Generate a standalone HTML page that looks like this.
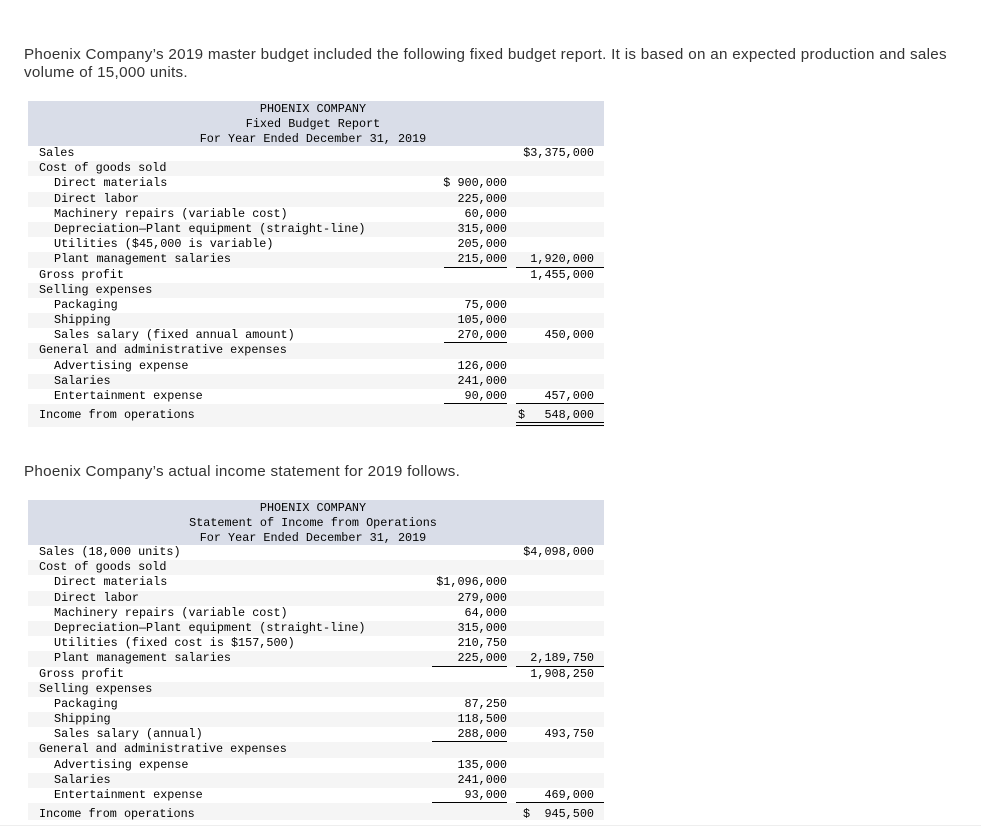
<!DOCTYPE html>
<html><head><meta charset="utf-8"><style>
body{margin:0;width:981px;height:840px;overflow:hidden;background:#fff;position:relative;font-family:"Liberation Sans",sans-serif;}
.p{position:absolute;left:24px;font-size:15.2px;letter-spacing:0.3px;color:#333;line-height:18px;white-space:nowrap;}
.t{position:absolute;left:28px;width:576px;font-family:"Liberation Mono",monospace;font-size:11.8px;color:#000;}
.h{background:#d9dde8;height:45px;text-align:center;line-height:15px;padding-right:0;}
.h div{width:570px;}
.r{position:relative;height:15.2px;line-height:15.2px;white-space:pre;}
.l{position:absolute;left:11px;}
.i{left:26px;}
.a{position:absolute;right:97px;}
.b{position:absolute;right:10px;}
.u1{position:absolute;left:416px;width:63px;bottom:0;border-bottom:1px solid #000;}
.u2{position:absolute;left:488px;width:88px;bottom:0;border-bottom:1px solid #000;}
.dd{position:absolute;left:488px;width:88px;bottom:1px;height:2px;border-top:1px solid #000;border-bottom:1px solid #000;}
</style></head><body>
<div class="p" style="top:46px">Phoenix Company’s 2019 master budget included the following fixed budget report. It is based on an expected production and sales<br>volume of 15,000 units.</div>
<div class="t" style="top:101px">
<div class="h"><div style="padding-top:1px">PHOENIX COMPANY<br>Fixed Budget Report<br>For Year Ended December 31, 2019</div></div>
<div>
<div class="r" style="background:#fff"><span class="l">Sales</span><span class="b">$3,375,000</span></div>
<div class="r" style="background:#f5f5f5"><span class="l">Cost of goods sold</span></div>
<div class="r" style="background:#fff"><span class="l i">Direct materials</span><span class="a">$ 900,000</span></div>
<div class="r" style="background:#f5f5f5"><span class="l i">Direct labor</span><span class="a">225,000</span></div>
<div class="r" style="background:#fff"><span class="l i">Machinery repairs (variable cost)</span><span class="a">60,000</span></div>
<div class="r" style="background:#f5f5f5"><span class="l i">Depreciation—Plant equipment (straight-line)</span><span class="a">315,000</span></div>
<div class="r" style="background:#fff"><span class="l i">Utilities ($45,000 is variable)</span><span class="a">205,000</span></div>
<div class="r" style="background:#f5f5f5"><span class="l i">Plant management salaries</span><span class="a">215,000</span><span class="b">1,920,000</span><i class="u1"></i><i class="u2"></i></div>
<div class="r" style="background:#fff"><span class="l">Gross profit</span><span class="b">1,455,000</span></div>
<div class="r" style="background:#f5f5f5"><span class="l">Selling expenses</span></div>
<div class="r" style="background:#fff"><span class="l i">Packaging</span><span class="a">75,000</span></div>
<div class="r" style="background:#f5f5f5"><span class="l i">Shipping</span><span class="a">105,000</span></div>
<div class="r" style="background:#fff"><span class="l i">Sales salary (fixed annual amount)</span><span class="a">270,000</span><span class="b">450,000</span><i class="u1"></i></div>
<div class="r" style="background:#f5f5f5"><span class="l">General and administrative expenses</span></div>
<div class="r" style="background:#fff"><span class="l i">Advertising expense</span><span class="a">126,000</span></div>
<div class="r" style="background:#f5f5f5"><span class="l i">Salaries</span><span class="a">241,000</span></div>
<div class="r" style="background:#fff"><span class="l i">Entertainment expense</span><span class="a">90,000</span><span class="b">457,000</span><i class="u1"></i><i class="u2"></i></div>
<div class="r" style="background:#f5f5f5;height:23px;line-height:22px"><span class="l">Income from operations</span><span class="b" style="left:490px;right:auto">$</span><span class="b">548,000</span><i class="dd"></i></div>
</div></div>
<div class="p" style="top:463px">Phoenix Company’s actual income statement for 2019 follows.</div>
<div class="t" style="top:500px;height:320px;overflow:hidden">
<div class="h"><div style="padding-top:1px">PHOENIX COMPANY<br>Statement of Income from Operations<br>For Year Ended December 31, 2019</div></div>
<div>
<div class="r" style="background:#fff"><span class="l">Sales (18,000 units)</span><span class="b">$4,098,000</span></div>
<div class="r" style="background:#f5f5f5"><span class="l">Cost of goods sold</span></div>
<div class="r" style="background:#fff"><span class="l i">Direct materials</span><span class="a">$1,096,000</span></div>
<div class="r" style="background:#f5f5f5"><span class="l i">Direct labor</span><span class="a">279,000</span></div>
<div class="r" style="background:#fff"><span class="l i">Machinery repairs (variable cost)</span><span class="a">64,000</span></div>
<div class="r" style="background:#f5f5f5"><span class="l i">Depreciation—Plant equipment (straight-line)</span><span class="a">315,000</span></div>
<div class="r" style="background:#fff"><span class="l i">Utilities (fixed cost is $157,500)</span><span class="a">210,750</span></div>
<div class="r" style="background:#f5f5f5"><span class="l i">Plant management salaries</span><span class="a">225,000</span><span class="b">2,189,750</span><i class="u1" style="left:404px;width:75px"></i><i class="u2"></i></div>
<div class="r" style="background:#fff"><span class="l">Gross profit</span><span class="b">1,908,250</span></div>
<div class="r" style="background:#f5f5f5"><span class="l">Selling expenses</span></div>
<div class="r" style="background:#fff"><span class="l i">Packaging</span><span class="a">87,250</span></div>
<div class="r" style="background:#f5f5f5"><span class="l i">Shipping</span><span class="a">118,500</span></div>
<div class="r" style="background:#fff"><span class="l i">Sales salary (annual)</span><span class="a">288,000</span><span class="b">493,750</span><i class="u1" style="left:404px;width:75px"></i></div>
<div class="r" style="background:#f5f5f5"><span class="l">General and administrative expenses</span></div>
<div class="r" style="background:#fff"><span class="l i">Advertising expense</span><span class="a">135,000</span></div>
<div class="r" style="background:#f5f5f5"><span class="l i">Salaries</span><span class="a">241,000</span></div>
<div class="r" style="background:#fff"><span class="l i">Entertainment expense</span><span class="a">93,000</span><span class="b">469,000</span><i class="u1" style="left:404px;width:75px"></i><i class="u2"></i></div>
<div class="r" style="background:#f5f5f5;height:23px;line-height:22px"><span class="l">Income from operations</span><span class="b" style="left:495px;right:auto">$</span><span class="b">945,500</span></div>
</div></div>
<div style="position:absolute;left:0;top:825px;width:981px;border-top:1px solid #eee"></div>
</body></html>
